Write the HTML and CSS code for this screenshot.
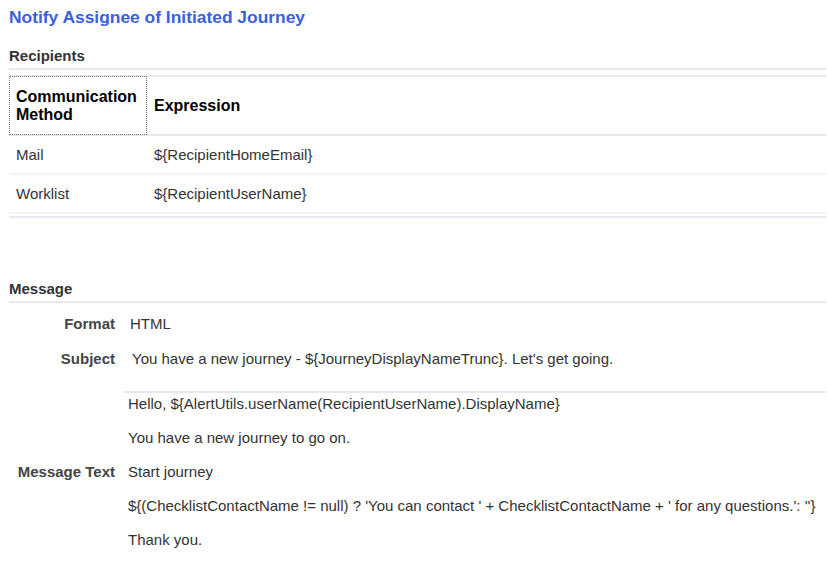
FILE: index.html
```html
<!DOCTYPE html>
<html lang="en">
  <head>
    <meta charset="UTF-8">
    <meta name="viewport" content="width=device-width, initial-scale=1.0">
    <title>Notify Assignee of Initiated Journey</title>
    <link rel="stylesheet" href="styles.css">
  </head>
  <body>
    <h1 class="page-title">Notify Assignee of Initiated Journey</h1>

    <section class="recipients">
      <h2 class="section-head">Recipients</h2>
      <table class="recipient-table">
        <thead>
          <tr>
            <th class="method-col focused">Communication<br>Method</th>
            <th>Expression</th>
          </tr>
        </thead>
        <tbody>
          <tr>
            <td>Mail</td>
            <td>${RecipientHomeEmail}</td>
          </tr>
          <tr>
            <td>Worklist</td>
            <td>${RecipientUserName}</td>
          </tr>
        </tbody>
      </table>
      <div class="table-end"></div>
    </section>

    <section class="message">
      <h2 class="section-head">Message</h2>
      <div class="fields">
        <div class="field-label">Format</div>
        <div class="field-value format-value">HTML</div>

        <div class="field-label">Subject</div>
        <div class="field-value subject-value">You have a new journey - ${JourneyDisplayNameTrunc}. Let's get going.</div>

        <div class="field-label message-label">Message Text</div>
        <div class="field-value message-body">
          <p>Hello, ${AlertUtils.userName(RecipientUserName).DisplayName}</p>
          <p>You have a new journey to go on.</p>
          <p>Start journey</p>
          <p>${(ChecklistContactName != null) ? 'You can contact ' + ChecklistContactName + ' for any questions.': ''}</p>
          <p>Thank you.</p>
        </div>
      </div>
    </section>
  </body>
</html>
```

FILE: styles.css
```css
body {
  font-family: "Liberation Sans", Arial, sans-serif;
  font-size: 15px;
  color: #333;
  background-color: #fff;
  margin: 8px 1px 0 9px;
}

.page-title {
  margin: 0;
  font-size: 17.4px;
  line-height: 19px;
  color: #3a5fe0;
}

.section-head {
  margin: 20px 0 0;
  padding-bottom: 4px;
  font-size: 15px;
  line-height: 17px;
  color: #333;
  border-bottom: 2px solid #e6eaee;
}

/* Recipients table */

.recipient-table {
  width: 100%;
  margin-top: 5px;
  border-collapse: collapse;
  border-top: 2px solid #e6eaee;
}

.recipient-table th {
  height: 57px;
  padding: 0 7px;
  font-size: 16px;
  line-height: 18px;
  color: #000;
  text-align: left;
  border-bottom: 2px solid #e3e8ec;
}

.recipient-table th.method-col {
  width: 124px;
}

.recipient-table th.focused {
  outline: 1px dotted #777;
  outline-offset: -1px;
}

.recipient-table td {
  height: 37px;
  padding: 0 7px;
  line-height: 17px;
  border-bottom: 2px solid #f3f3f3;
}

.table-end {
  margin-top: 2px;
  border-top: 2px solid #e6eaee;
}

/* Message section */

.message .section-head {
  margin-top: 62px;
}

.fields {
  display: grid;
  grid-template-columns: 114px 1fr;
  align-items: center;
  margin-top: 3px;
}

.field-label {
  padding-right: 8px;
  font-weight: bold;
  color: #444;
  text-align: right;
}

.field-value {
  padding: 8px 0 8px 7px;
  line-height: 19px;
}

.subject-value {
  padding-left: 9px;
}

.message-label,
.message-body {
  margin-top: 15px;
}

.message-body {
  padding: 2px 0 2px 5px;
  border-top: 2px solid #e6eaee;
}

.message-body p {
  margin: 0 0 16px;
  line-height: 18px;
}

.message-body p:last-child {
  margin-bottom: 0;
}
```
